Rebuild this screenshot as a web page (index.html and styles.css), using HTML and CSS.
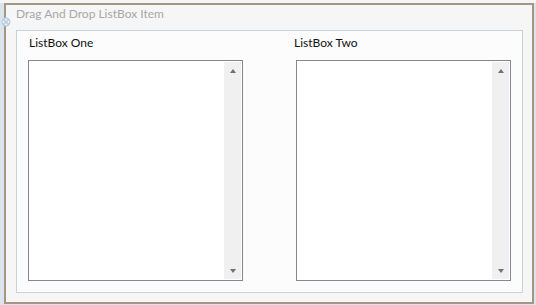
FILE: index.html
```html
<!DOCTYPE html>
<html>
<head>
<meta charset="utf-8">
<link rel="stylesheet" href="styles.css">
</head>
<body>
<div class="window">
  <div class="frame">
    <div class="title">Drag And Drop ListBox Item</div>
    <div class="panel">
      <div class="col">
        <div class="label one">ListBox One</div>
        <div class="listbox">
          <div class="items"></div>
          <div class="scrollbar">
            <div class="arrow up"></div>
            <div class="track"></div>
            <div class="arrow down"></div>
          </div>
        </div>
      </div>
      <div class="col">
        <div class="label two">ListBox Two</div>
        <div class="listbox">
          <div class="items"></div>
          <div class="scrollbar">
            <div class="arrow up"></div>
            <div class="track"></div>
            <div class="arrow down"></div>
          </div>
        </div>
      </div>
    </div>
  </div>
  <svg class="move-icon" width="10" height="10" viewBox="0 0 10 10">
    <circle cx="5" cy="5" r="4.5" fill="#b9cde3"/>
    <path d="M5 1.5 L6.5 3.2 H3.5 Z M5 8.5 L6.5 6.8 H3.5 Z M1.5 5 L3.2 3.5 V6.5 Z M8.5 5 L6.8 3.5 V6.5 Z" fill="#ffffff"/>
  </svg>
</div>
</body>
</html>
```
FILE: styles.css
```css
html, body {
  margin: 0;
  padding: 0;
}
body {
  width: 536px;
  height: 305px;
  background: #dbe4ed;
  font-family: "Segoe UI", Lato, "Noto Sans", sans-serif;
  font-size: 12px;
  overflow: hidden;
}
.window {
  position: relative;
  height: 305px;
  box-sizing: border-box;
  padding: 3px 2px 1px 4px;
  background: linear-gradient(#f4f5f6, #f4f5f6) top / 100% 3px no-repeat, #dbe4ed;
}
.frame {
  height: 301px;
  box-sizing: border-box;
  border: 2px solid #a59683;
  background: #f6f6f6;
  padding: 0 9px 9px 10px;
  display: flex;
  flex-direction: column;
}
.title {
  height: 25px;
  line-height: 17px;
  color: #a8a8a8;
}
.panel {
  flex: 1;
  border: 1px solid #c8d2dd;
  background: #fcfcfc;
  padding: 3px 11px 11px 11px;
  display: grid;
  grid-template-columns: 215px 215px;
  column-gap: 53px;
}
.col {
  display: flex;
  flex-direction: column;
}
.label {
  line-height: 17px;
  height: 17px;
  margin-bottom: 9px;
  color: #111;
}
.label.one { padding-left: 1px; }
.label.two { margin-left: -2px; }
.listbox {
  flex: 1;
  border: 1px solid #828790;
  background: #fff;
  padding: 1px;
  display: flex;
}
.items { flex: 1; }
.scrollbar {
  width: 17px;
  background: #f0f0f0;
  display: flex;
  flex-direction: column;
}
.track { flex: 1; }
.arrow {
  height: 17px;
  display: flex;
  align-items: center;
  justify-content: center;
}
.arrow::before {
  content: "";
  width: 0;
  height: 0;
  border-left: 3.5px solid transparent;
  border-right: 3.5px solid transparent;
}
.arrow.up::before { border-bottom: 4px solid #707070; }
.arrow.down::before { border-top: 4px solid #707070; }
.move-icon {
  position: absolute;
  left: 1px;
  top: 17px;
}
```
